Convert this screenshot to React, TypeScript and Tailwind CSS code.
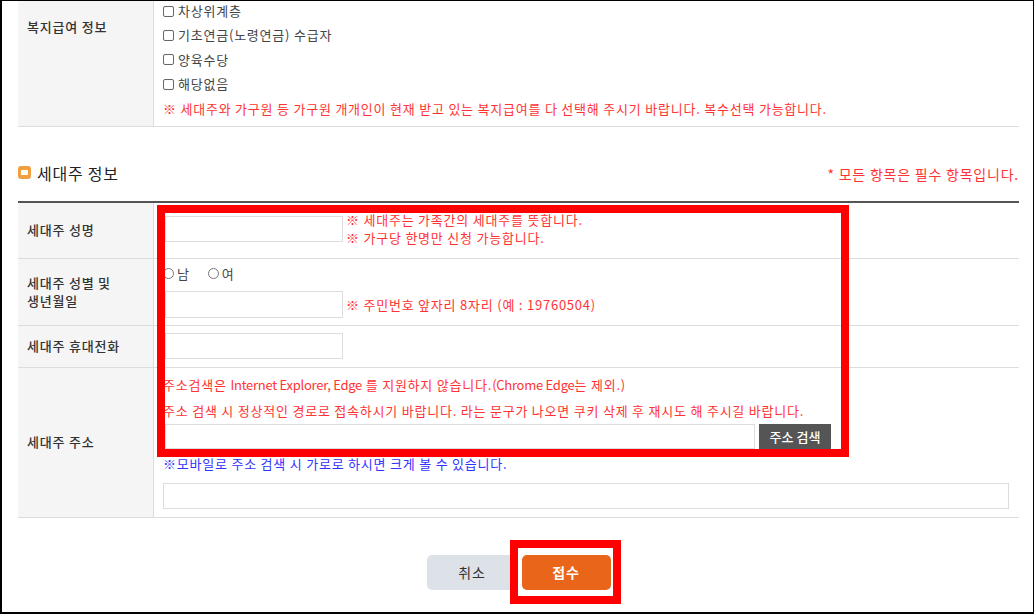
const WELFARE_ITEMS = ['차상위계층', '기초연금(노령연금) 수급자', '양육수당', '해당없음'];

function CheckBox({ label }: { label: string }) {
  return (
    <div className="flex items-center h-[24.4px]">
      <span className="inline-block w-[11px] h-[11px] border border-[#666] rounded-[2px] mr-[4px]" />
      <span>{label}</span>
    </div>
  );
}

function Radio({ label }: { label: string }) {
  return (
    <span className="flex items-center">
      <span className="inline-block w-[11px] h-[11px] border border-[#777] rounded-full mr-[3px]" />
      {label}
    </span>
  );
}

function Label({ children, top }: { children: React.ReactNode; top?: boolean }) {
  return (
    <div
      className={
        'w-[136px] shrink-0 bg-[#f5f5f5] border-r border-[#ddd] pl-[9px] text-[13px] leading-[18px] font-medium text-[#333] flex ' +
        (top ? 'items-start pt-[19px]' : 'items-center')
      }
    >
      {children}
    </div>
  );
}

export default function App() {
  return (
    <div className="w-[1034px] h-[614px] overflow-hidden relative bg-white border-t border-l-2 border-r border-b-2 border-black font-['Noto_Sans_CJK_KR','Noto_Sans',sans-serif] text-[13px] tracking-[0.06em] text-[#444]">
      <div className="ml-[16px] w-[1001px] -mt-[2px]">
        {/* 복지급여 */}
        <div className="flex border-b border-[#ddd]">
          <Label top>복지급여 정보</Label>
          <div className="pl-[9px] pb-[5px] leading-[24.4px]">
            {WELFARE_ITEMS.map((item) => (
              <CheckBox key={item} label={item} />
            ))}
            <div className="text-[#f33] h-[24.4px]">
              ※ 세대주와 가구원 등 가구원 개개인이 현재 받고 있는 복지급여를 다 선택해 주시기 바랍니다. 복수선택 가능합니다.
            </div>
          </div>
        </div>

        {/* 세대주 정보 헤더 */}
        <div className="mt-[34px] mb-[16px] h-[24px] flex items-center justify-between">
          <div className="flex items-center">
            <span className="w-[13px] h-[13px] rounded-[3px] bg-[#f0a040] flex items-center justify-center mr-[6px]">
              <span className="w-[7px] h-[5px] bg-white rounded-[1px]" />
            </span>
            <span className="text-[16px] leading-[24px] text-[#222]">세대주 정보</span>
          </div>
          <span className="text-[14px] text-[#f33] pt-[4px]">* 모든 항목은 필수 항목입니다.</span>
        </div>

        <div className="border-t-2 border-[#555]">
          {/* 성명 */}
          <div className="flex h-[56px] border-b border-[#ddd]">
            <Label>세대주 성명</Label>
            <div className="flex items-center pl-[11px] pb-[3px]">
              <input className="w-[178px] h-[26px] border border-[#ddd] outline-none" />
              <div className="ml-[3px] leading-[18px] text-[#f33]">
                <div>※ 세대주는 가족간의 세대주를 뜻합니다.</div>
                <div>※ 가구당 한명만 신청 가능합니다.</div>
              </div>
            </div>
          </div>

          {/* 성별 및 생년월일 */}
          <div className="flex h-[67px] border-b border-[#ddd]">
            <Label>
              세대주 성별 및<br />생년월일
            </Label>
            <div className="pl-[9px] pt-[6px]">
              <div className="flex gap-[18px] h-[18px] leading-[18px]">
                <Radio label="남" />
                <Radio label="여" />
              </div>
              <div className="flex items-center mt-[8px] ml-[2px]">
                <input className="w-[178px] h-[27px] border border-[#ddd] outline-none" />
                <span className="ml-[3px] text-[#f33]">※ 주민번호 앞자리 8자리 (예 : 19760504)</span>
              </div>
            </div>
          </div>

          {/* 휴대전화 */}
          <div className="flex h-[42px] border-b border-[#ddd]">
            <Label>세대주 휴대전화</Label>
            <div className="flex items-center pl-[11px]">
              <input className="w-[178px] h-[26px] border border-[#ddd] outline-none" />
            </div>
          </div>

          {/* 주소 */}
          <div className="flex h-[150px] border-b border-[#ddd]">
            <Label>세대주 주소</Label>
            <div className="pl-[9px] pt-[4px] pb-[8px]">
              <div className="leading-[26px] text-[#f33]">
                <div>
                  주소검색은 <span className="tracking-[-0.02em]">Internet Explorer, Edge</span> 를 지원하지 않습니다.
                  <span className="tracking-[-0.02em]">(Chrome Edge</span>는 제외.)
                </div>
                <div>주소 검색 시 정상적인 경로로 접속하시기 바랍니다. 라는 문구가 나오면 쿠키 삭제 후 재시도 해 주시길 바랍니다.</div>
              </div>
              <div className="flex gap-[4px] ml-[2px]">
                <input className="w-[590px] h-[25px] border border-[#ddd] outline-none" />
                <button className="w-[72px] h-[25px] bg-[#555] text-white text-[13px] font-medium tracking-normal">주소 검색</button>
              </div>
              <div className="mt-[6px] leading-[18px] text-[#3333ff]">※모바일로 주소 검색 시 가로로 하시면 크게 볼 수 있습니다.</div>
              <input className="mt-[10px] w-[846px] h-[26px] border border-[#ddd] outline-none" />
            </div>
          </div>
        </div>

        {/* 버튼 */}
        <div className="mt-[37px] flex justify-center gap-[4px]">
          <button className="w-[91px] h-[35px] rounded-[5px] bg-[#dde1e8] text-[14px] text-[#333]">취소</button>
          <button className="w-[89px] h-[35px] rounded-[5px] bg-[#e8651a] text-[14px] text-white font-bold">접수</button>
        </div>
      </div>

      {/* 강조 표시 */}
      <div className="absolute left-[155px] top-[204px] w-[692px] h-[252px] border-[8px] border-[#ff0000]" />
      <div className="absolute left-[508px] top-[539px] w-[111px] h-[64px] border-[8px] border-[#ff0000]" />
    </div>
  );
}
